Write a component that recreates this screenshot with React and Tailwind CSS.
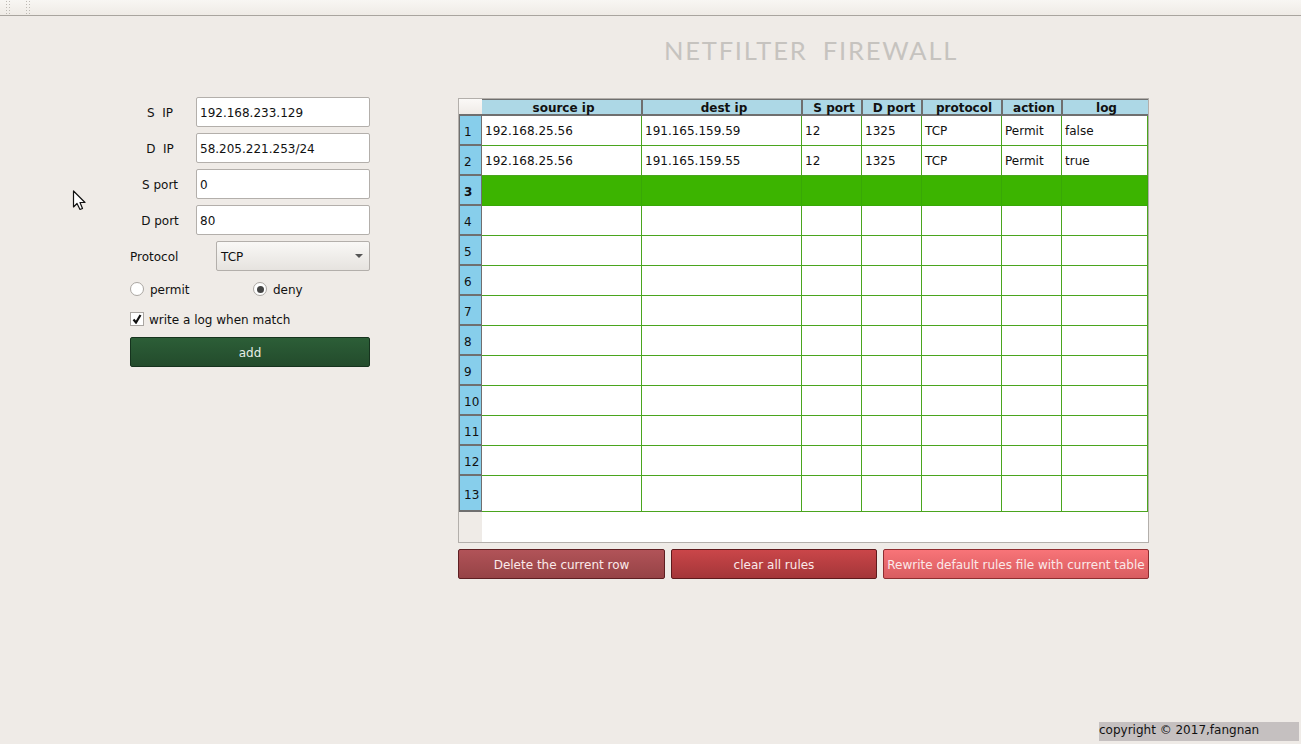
import React from "react";

const columns = [
  { name: "source ip", width: "w-[160px]", head: "w-[161px] pl-[4px]" },
  { name: "dest ip", width: "w-[160px]", head: "w-[160px] pl-[4px]" },
  { name: "S port", width: "w-[60px]", head: "w-[60px] pl-[4px]" },
  { name: "D port", width: "w-[60px]", head: "w-[60px] pl-[4px]" },
  { name: "protocol", width: "w-[80px]", head: "w-[80px] pl-[4px]" },
  { name: "action", width: "w-[60px]", head: "w-[60px] pl-[4px]" },
  { name: "log", width: "w-[86px]", head: "w-[85px] pl-[2px]" },
];

const rows = [
  ["192.168.25.56", "191.165.159.59", "12", "1325", "TCP", "Permit", "false"],
  ["192.168.25.56", "191.165.159.55", "12", "1325", "TCP", "Permit", "true"],
  ...Array.from({ length: 11 }, () => ["", "", "", "", "", "", ""]),
];

const FormRow = ({ label, value }) => (
  <div className="flex items-center h-[30px]">
    <span className="w-[60px] pt-[2px] text-center whitespace-pre">{label}</span>
    <div className="ml-[6px] w-[174px] h-full flex items-center pl-[3px] pt-[1px] bg-white border border-[#b3afab] rounded-[2px]">
      {value}
    </div>
  </div>
);

const Radio = ({ label, checked, width }) => (
  <div className={`flex items-center gap-[6px] ${width}`}>
    <div className="w-[14px] h-[14px] rounded-full border border-[#aaa6a2] bg-white flex items-center justify-center">
      {checked && <div className="w-[7px] h-[7px] rounded-full bg-[#444]" />}
    </div>
    <span className="pt-[2px]">{label}</span>
  </div>
);

const ActionButton = ({ label, width, colors }) => (
  <button className={`${width} h-[30px] pt-[1px] rounded-[2px] border text-[#fbe9e9] whitespace-nowrap ${colors}`}>
    {label}
  </button>
);

const Toolbar = () => (
  <div className="h-[16px] shrink-0 border-b border-[#a9a59f] bg-gradient-to-b from-[#f8f6f3] to-[#efebe6] flex pl-[5px] gap-[14px]">
    <div className="w-[6px] h-[15px] bg-[radial-gradient(#bdb9b3_1px,transparent_1px)] bg-[length:3px_3px]" />
    <div className="w-[6px] h-[15px] bg-[radial-gradient(#bdb9b3_1px,transparent_1px)] bg-[length:3px_3px]" />
  </div>
);

const RulesTable = () => (
  <div className="w-[691px] h-[445px] border border-[#b3afab] bg-white flex flex-col">
    <div className="flex h-[17px] shrink-0">
      <div className="w-[23px] bg-gradient-to-b from-[#fbf9f7] to-[#efebe7] border-b-2 border-[#6f6f6f]" />
      {columns.map((col) => (
        <div
          key={col.name}
          className={`${col.head} h-full pt-[2px] bg-[#add8e6] border-t border-r-2 border-b-2 border-[#6f6f6f] last:border-r-0 flex items-center justify-center font-bold leading-none`}
        >
          {col.name}
        </div>
      ))}
    </div>
    {rows.map((row, i) => (
      <div key={i} className={`flex shrink-0 ${i === 12 ? "h-[36px]" : "h-[30px]"} ${i === 2 ? "bg-[#3cb400]" : ""}`}>
        <div className={`w-[23px] pl-[4px] pt-[3px] bg-[#87ceeb] border-x border-b-2 border-[#6f6f6f] flex items-center ${i === 2 ? "font-bold" : ""}`}>
          {i + 1}
        </div>
        {row.map((cell, j) => (
          <div
            key={j}
            className={`${columns[j].width} border-r border-b ${i === 2 ? "border-[#38a806]" : "border-[#4aa51e]"} flex items-center pl-[3px]`}
          >
            {cell}
          </div>
        ))}
      </div>
    ))}
    <div className="flex flex-1">
      <div className="w-[23px] bg-[#efebe7]" />
    </div>
  </div>
);

const App = () => {
  return (
    <div className="relative w-[1301px] h-[744px] overflow-hidden bg-[#efebe7] text-[#111] text-[12px] flex flex-col font-['DejaVu_Sans',sans-serif]">
      <Toolbar />
      <div className="h-[82px] shrink-0 pl-[664px] pt-[18px]">
        <h1 className="text-[25.5px] leading-[32px] tracking-[1.8px] [word-spacing:7px] font-normal text-[#c6c3bf] font-['Lato',sans-serif] whitespace-nowrap">
          NETFILTER FIREWALL
        </h1>
      </div>
      <div className="flex flex-1 pl-[130px]">
        <div className="w-[240px] flex flex-col mt-[-1px]">
          <div className="flex flex-col gap-[6px]">
            <FormRow label="S  IP" value="192.168.233.129" />
            <FormRow label="D  IP" value="58.205.221.253/24" />
            <FormRow label="S port" value="0" />
            <FormRow label="D port" value="80" />
            <div className="flex items-center h-[30px]">
              <span className="w-[86px] pt-[2px]">Protocol</span>
              <div className="w-[154px] h-full flex items-center justify-between pl-[4px] pr-[6px] rounded-[2px] border border-[#b3afab] bg-gradient-to-b from-[#f9f8f6] to-[#e6e3df]">
                <span className="pt-[1px]">TCP</span>
                <div className="w-0 h-0 border-x-[4px] border-x-transparent border-t-[4px] border-t-[#555]" />
              </div>
            </div>
          </div>
          <div className="flex items-center h-[20px] mt-[8px]">
            <Radio label="permit" width="w-[123px]" />
            <Radio label="deny" checked />
          </div>
          <div className="flex items-center gap-[5px] h-[20px] mt-[10px]">
            <div className="w-[14px] h-[14px] border border-[#aaa6a2] bg-white flex items-center justify-center">
              <svg width="10" height="10" viewBox="0 0 10 10" fill="none">
                <path d="M1.5 5.5 L4 8.5 L8.5 1" stroke="#111" strokeWidth="2.2" />
              </svg>
            </div>
            <span className="pt-[2px]">write a log when match</span>
          </div>
          <button className="mt-[8px] w-[240px] h-[30px] pt-[2px] rounded-[2px] border border-[#16331e] bg-gradient-to-b from-[#2c5e37] to-[#234b2c] text-[#e6efe6]">
            add
          </button>
        </div>
        <div className="ml-[88px] flex flex-col gap-[6px]">
          <RulesTable />
          <div className="flex gap-[6px]">
            <ActionButton label="Delete the current row" width="w-[207px]" colors="border-[#5e1f22] bg-gradient-to-b from-[#b15358] to-[#964346]" />
            <ActionButton label="clear all rules" width="w-[206px]" colors="border-[#5e1a1c] bg-gradient-to-b from-[#ca4649] to-[#a43639]" />
            <ActionButton label="Rewrite default rules file with current table" width="w-[266px]" colors="border-[#8e2d30] bg-gradient-to-b from-[#f87478] to-[#d85c60]" />
          </div>
        </div>
      </div>
      <div className="flex justify-end pr-[2px] pb-[3px]">
        <div className="w-[200px] h-[19px] bg-[#c5c0c0] text-[12px] leading-[17px] whitespace-nowrap">copyright © 2017,fangnan</div>
      </div>
      {/* mouse pointer caught in the screenshot */}
      <svg className="absolute left-[72px] top-[190px]" width="15" height="21" viewBox="0 0 15 21">
        <path d="M1.5 1 L1.5 17 L5 13.5 L8 19.5 L10.5 18.5 L8 12.5 L13 12.5 Z" fill="#fff" stroke="#111" strokeWidth="1.2" strokeLinejoin="round" />
      </svg>
    </div>
  );
};

export default App;
